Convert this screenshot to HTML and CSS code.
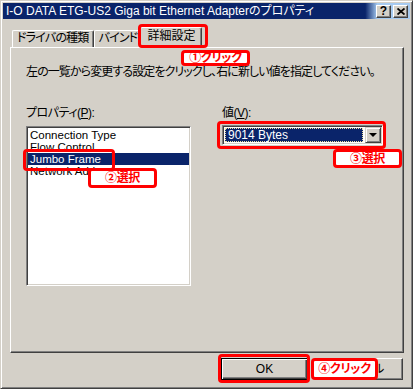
FILE: index.html
```html
<!DOCTYPE html>
<html lang="ja">

<head>
  <meta charset="UTF-8">
  <meta name="viewport" content="width=device-width, initial-scale=1.0">
  <title>プロパティ</title>
  <link rel="stylesheet" href="styles.css">
</head>

<body>
  <div class="window">
    <div class="titlebar">
      <span class="title">I-O DATA ETG-US2 Giga bit Ethernet Adapterのプロパティ</span>
      <div class="cap-btns">
        <span class="cap-btn help">?</span>
        <span class="cap-btn close">
          <svg width="8" height="7" viewBox="0 0 8 7">
            <path d="M0.5 0.5 L7.5 6.5 M7.5 0.5 L0.5 6.5" stroke="#000" stroke-width="1.8" fill="none"/>
          </svg>
        </span>
      </div>
    </div>

    <div class="client">
      <div class="tabs">
        <div class="tab">ドライバの種類</div>
        <div class="tab">バインド</div>
        <div class="tab active">詳細設定</div>
      </div>

      <div class="panel">
        <p class="desc">左の一覧から変更する設定をクリックし、右に新しい値を指定してください。</p>
        <div class="fields">
          <div class="field">
            <div class="field-label">プロパティ(<u>P</u>):</div>
            <ul class="listbox">
              <li>Connection Type</li>
              <li>Flow Control</li>
              <li class="selected">Jumbo Frame</li>
              <li>Network Address</li>
            </ul>
          </div>
          <div class="field">
            <div class="field-label">値(<u>V</u>):</div>
            <div class="combo">
              <div class="combo-value">9014 Bytes</div>
              <div class="combo-arrow"><span class="tri"></span></div>
            </div>
          </div>
        </div>
      </div>

      <div class="footer">
        <div class="btn default">OK</div>
        <div class="btn jp">キャンセル</div>
      </div>
    </div>
  </div>

  <!-- 注釈 -->
  <div class="mark box-tab"></div>
  <div class="mark box-item"></div>
  <div class="mark box-combo"></div>
  <div class="mark box-ok"></div>
  <div class="mark note note-1">①クリック</div>
  <div class="mark note note-2">②選択</div>
  <div class="mark note note-3">③選択</div>
  <div class="mark note note-4">④クリック</div>
</body>

</html>
```

FILE: styles.css
```css
* {
  margin: 0;
  padding: 0;
  box-sizing: border-box;
}

body {
  position: relative;
  width: 413px;
  height: 389px;
  font-family: "Liberation Sans", "Noto Sans CJK JP", sans-serif;
  font-size: 12px;
  font-feature-settings: "palt";
  color: #000;
  background: #d4d0c8;
}

.window {
  width: 413px;
  height: 389px;
  padding: 2px;
  background: #d4d0c8;
  border: 1px solid;
  border-color: #d4d0c8 #404040 #404040 #d4d0c8;
  box-shadow: inset 1px 1px #fff, inset -1px -1px #808080;
}

/* タイトルバー */
.titlebar {
  height: 16px;
  display: flex;
  align-items: center;
  justify-content: space-between;
  padding: 0 2px 0 3px;
  background: linear-gradient(90deg, #0a246a 0%, #0a246a 89%, #a6caf0 92%);
}

.title {
  color: #fff;
  line-height: 16px;
  white-space: nowrap;
}

.cap-btns {
  display: flex;
  gap: 2px;
}

.cap-btn {
  width: 15px;
  height: 13px;
  display: flex;
  align-items: center;
  justify-content: center;
  background: #d4d0c8;
  border: 1px solid;
  border-color: #fff #404040 #404040 #fff;
  box-shadow: inset -1px -1px #808080;
  font-weight: bold;
  font-size: 12px;
  line-height: 11px;
}

/* タブ */
.client {
  padding: 8px 6px 0 7px;
}

.tabs {
  position: relative;
  z-index: 1;
  display: flex;
  align-items: flex-end;
  height: 20px;
  padding-left: 2px;
}

.tab {
  height: 17px;
  padding: 0 4px;
  line-height: 15px;
  letter-spacing: -0.8px;
  background: #d4d0c8;
  border: 1px solid;
  border-bottom: none;
  border-color: #fff #404040 #404040 #fff;
  border-radius: 2px 2px 0 0;
  box-shadow: inset -1px 0 #808080;
  white-space: nowrap;
}

.tab.active {
  position: relative;
  height: 21px;
  margin: 0 -2px -1px;
  padding: 1px 6px 0;
  letter-spacing: 0;
}

.panel {
  height: 306px;
  padding: 17px 0 0 15px;
  border: 1px solid;
  border-color: #fff #404040 #404040 #fff;
  box-shadow: inset -1px -1px #808080;
}

.desc {
  line-height: 14px;
  letter-spacing: -0.9px;
  white-space: nowrap;
}

.fields {
  display: grid;
  grid-template-columns: 165px 161px;
  column-gap: 31px;
  margin-top: 27px;
}

.field-label {
  line-height: 14px;
  letter-spacing: -0.5px;
}

/* リストボックス */
.listbox {
  list-style: none;
  width: 165px;
  height: 160px;
  margin-top: 6px;
  padding: 2px 1px 0;
  font-size: 11.5px;
  background: #fff;
  border: 1px solid;
  border-color: #808080 #fff #fff #808080;
  box-shadow: inset 1px 1px #404040, inset -1px -1px #d4d0c8;
}

.listbox li {
  height: 12px;
  line-height: 12px;
  padding-left: 2px;
  white-space: nowrap;
  overflow: hidden;
}

.listbox li.selected {
  background: #0a246a;
  color: #fff;
}

/* コンボボックス */
.combo {
  display: flex;
  width: 161px;
  height: 20px;
  margin-top: 5px;
  padding: 1px;
  background: #fff;
  border: 1px solid;
  border-color: #808080 #fff #fff #808080;
  box-shadow: inset 1px 1px #404040, inset -1px -1px #d4d0c8;
}

.combo-value {
  flex: 1;
  margin: 1px 2px 1px 1px;
  padding-left: 2px;
  line-height: 12px;
  color: #fff;
  background: #0a246a;
  border: 1px dotted #f0e0a0;
}

.combo-arrow {
  width: 16px;
  height: 16px;
  display: flex;
  align-items: center;
  justify-content: center;
  background: #d4d0c8;
  border: 1px solid;
  border-color: #d4d0c8 #404040 #404040 #d4d0c8;
  box-shadow: inset 1px 1px #fff, inset -1px -1px #808080;
}

.tri {
  width: 0;
  height: 0;
  border-left: 4px solid transparent;
  border-right: 4px solid transparent;
  border-top: 4px solid #000;
}

/* ボタン */
.footer {
  display: flex;
  justify-content: flex-end;
  gap: 8px;
  margin: 5px 1px 0 0;
}

.btn {
  width: 87px;
  height: 22px;
  line-height: 20px;
  text-align: center;
  background: #d4d0c8;
  border: 1px solid;
  border-color: #fff #404040 #404040 #fff;
  box-shadow: inset -1px -1px #808080;
}

.btn.jp {
  letter-spacing: -1.5px;
}

.btn.default {
  border-color: #000;
  box-shadow: inset 1px 1px #fff, inset -1px -1px #404040, inset -2px -2px #808080;
}

/* 注釈 */
.mark {
  position: absolute;
  z-index: 10;
  border: 3px solid #f00;
  border-radius: 4px;
}

.box-tab {
  left: 138px;
  top: 24px;
  width: 70px;
  height: 24px;
}

.box-item {
  left: 23px;
  top: 149px;
  width: 92px;
  height: 22px;
}

.box-combo {
  left: 217px;
  top: 121px;
  width: 169px;
  height: 28px;
}

.box-ok {
  left: 218px;
  top: 354px;
  width: 92px;
  height: 29px;
}

.note {
  display: flex;
  align-items: center;
  justify-content: center;
  background: #fff;
  color: #f00;
  font-weight: bold;
  line-height: 12px;
  letter-spacing: -0.3px;
  white-space: nowrap;
}

.note-1 {
  left: 181px;
  top: 50px;
  width: 69px;
  height: 16px;
}

.note-2 {
  left: 88px;
  top: 168px;
  width: 69px;
  height: 20px;
}

.note-3 {
  left: 333px;
  top: 149px;
  width: 69px;
  height: 19px;
}

.note-4 {
  left: 311px;
  top: 358px;
  width: 67px;
  height: 22px;
}
```
